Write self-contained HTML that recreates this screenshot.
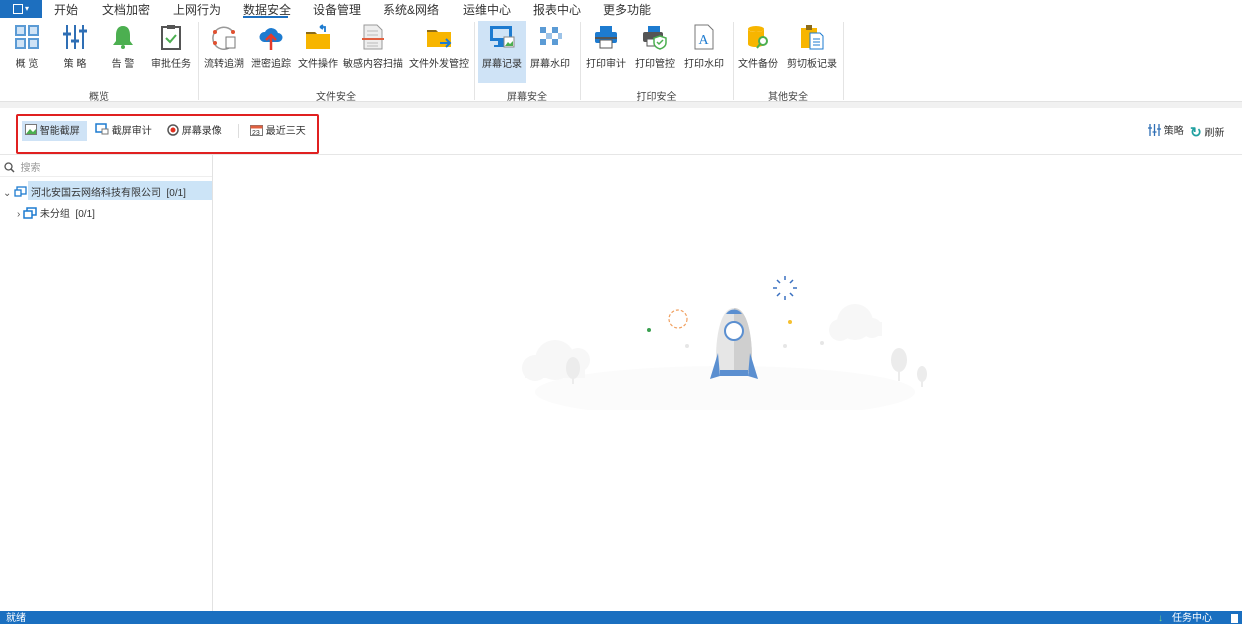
<!DOCTYPE html>
<html><head><meta charset="utf-8"><style>
*{margin:0;padding:0;box-sizing:border-box}
body{width:1242px;height:624px;position:relative;overflow:hidden;background:#fff;font-family:"Liberation Sans","Noto Sans CJK SC",sans-serif;color:#333}
.a{position:absolute}
.tab{position:absolute;top:1px;font-size:12px;color:#333}
.it{position:absolute;top:21px;height:62px;text-align:center;font-size:10px;color:#333}
.it svg{display:block;margin:3px auto 0}
.it span{position:absolute;top:34px;left:0;right:0;white-space:nowrap}
.gl{position:absolute;top:88px;font-size:10px;color:#444;text-align:center}
.sep{position:absolute;top:22px;width:1px;height:78px;background:#e4e4e4}
.tb{position:absolute;top:122px;height:20px;font-size:10px;line-height:20px;color:#333;white-space:nowrap}
</style></head><body>
<div class="a" style="left:0;top:0;width:42px;height:18px;background:#1d6fbf"></div>
<div class="a" style="left:13px;top:4px;width:10px;height:10px;border:1.5px solid #fff;"></div>
<div class="a" style="left:25px;top:4px;color:#fff;font-size:8px">▾</div>
<div class="tab" style="left:54px">开始</div>
<div class="tab" style="left:102px">文档加密</div>
<div class="tab" style="left:173px">上网行为</div>
<div class="tab" style="left:243px">数据安全</div>
<div class="a" style="left:243px;top:16px;width:45px;height:2px;background:#1d6fbf"></div>
<div class="tab" style="left:313px">设备管理</div>
<div class="tab" style="left:383px">系统&amp;网络</div>
<div class="tab" style="left:463px">运维中心</div>
<div class="tab" style="left:533px">报表中心</div>
<div class="tab" style="left:603px">更多功能</div>
<div class="a" style="left:478px;top:21px;width:48px;height:62px;background:#cfe3f6"></div>
<div class="it" style="left:3px;width:48px"><svg width="26" height="26"><g fill="#5b9bd5"><rect x="1" y="1" width="11" height="11"/><rect x="14" y="1" width="11" height="11"/><rect x="1" y="14" width="11" height="11"/><rect x="14" y="14" width="11" height="11"/></g><g fill="#cfe3f6"><rect x="3" y="3" width="7" height="7"/><rect x="16" y="3" width="7" height="7"/><rect x="3" y="16" width="7" height="7"/><rect x="16" y="16" width="7" height="7"/></g></svg><span>概 览</span></div>
<div class="it" style="left:51px;width:48px"><svg width="26" height="26" stroke="#2f6fb5" stroke-width="2"><path d="M5 1v24M13 1v24M21 1v24"/><path d="M1 10h8M9 17h8M17 7h8" stroke-width="3"/></svg><span>策 略</span></div>
<div class="it" style="left:99px;width:48px"><svg width="26" height="26"><path d="M13 2c-5 0-7 4-7 9v6l-3 4h20l-3-4v-6c0-5-2-9-7-9z" fill="#4caf50"/><circle cx="13" cy="23" r="2" fill="#4caf50"/></svg><span>告 警</span></div>
<div class="it" style="left:147px;width:48px"><svg width="26" height="26"><rect x="4" y="3" width="18" height="22" fill="none" stroke="#555" stroke-width="2"/><rect x="9" y="1" width="8" height="4" fill="#555"/><path d="M8 14l4 4 6-7" fill="none" stroke="#4caf50" stroke-width="2"/></svg><span>审批任务</span></div>
<div class="sep" style="left:198px"></div>
<div class="it" style="left:200px;width:48px"><svg width="26" height="26"><path d="M22 8a11 11 0 1 0-4 16" fill="none" stroke="#999" stroke-width="1.5"/><rect x="15" y="13" width="9" height="11" fill="#fff" stroke="#777"/><circle cx="4" cy="8" r="2" fill="#e05030"/><circle cx="22" cy="8" r="2" fill="#e05030"/><circle cx="4" cy="19" r="2" fill="#e05030"/></svg><span>流转追溯</span></div>
<div class="it" style="left:247px;width:48px"><svg width="26" height="26"><path d="M6 18a5 5 0 0 1 1-10 7 7 0 0 1 13 1 4.5 4.5 0 0 1 0 9z" fill="#1d7bd0"/><path d="M13 26V11M8 16l5-5 5 5" fill="none" stroke="#e53b2a" stroke-width="2.5"/></svg><span>泄密追踪</span></div>
<div class="it" style="left:294px;width:48px"><svg width="26" height="26"><path d="M1 8h9l2 2h13v15H1z" fill="#f7b500"/><path d="M1 8h9l2 2H1z" fill="#8b6b1a"/><path d="M20 8V3h-5M15 3l3-2M15 3l3 2" fill="none" stroke="#1d7bd0" stroke-width="1.8"/></svg><span>文件操作</span></div>
<div class="it" style="left:343px;width:60px"><svg width="26" height="26"><path d="M4 1h13l5 5v19H4z" fill="#eee" stroke="#999"/><path d="M7 7h11M7 11h11M7 19h11M7 22h11" stroke="#bbb"/><rect x="2" y="14" width="22" height="2" fill="#e06040"/></svg><span>敏感内容扫描</span></div>
<div class="it" style="left:408px;width:62px"><svg width="26" height="26"><path d="M1 6h9l2 2h13v15H1z" fill="#f7b500"/><path d="M1 6h9l2 2H1z" fill="#8b6b1a"/><path d="M14 19h10M20 15l4 4-4 4" fill="none" stroke="#1d7bd0" stroke-width="2"/></svg><span>文件外发管控</span></div>
<div class="sep" style="left:474px"></div>
<div class="it" style="left:478px;width:48px"><svg width="26" height="26"><rect x="1" y="2" width="22" height="15" fill="#1d7bd0"/><rect x="4" y="5" width="16" height="9" fill="#cfe3f6"/><rect x="9" y="17" width="6" height="4" fill="#1d7bd0"/><rect x="5" y="21" width="14" height="2" fill="#1d7bd0"/><rect x="15" y="13" width="10" height="10" fill="#fff" stroke="#888"/><path d="M16 22l3-4 2 2 3-3v5z" fill="#4caf50"/></svg><span>屏幕记录</span></div>
<div class="it" style="left:526px;width:48px"><svg width="26" height="26" fill="#5b9bd5"><rect x="3" y="3" width="6" height="6"/><rect x="15" y="3" width="6" height="6"/><rect x="9" y="9" width="6" height="6" fill="#9cc3e8"/><rect x="3" y="15" width="6" height="6"/><rect x="15" y="15" width="6" height="6"/><rect x="21" y="9" width="4" height="6" fill="#9cc3e8"/></svg><span>屏幕水印</span></div>
<div class="sep" style="left:580px"></div>
<div class="it" style="left:582px;width:48px"><svg width="26" height="26"><rect x="7" y="2" width="12" height="6" fill="#1d7bd0"/><rect x="2" y="8" width="22" height="11" rx="2" fill="#1d7bd0"/><rect x="2" y="13" width="22" height="2" fill="#555"/><rect x="7" y="16" width="12" height="8" fill="#fff" stroke="#555"/></svg><span>打印审计</span></div>
<div class="it" style="left:631px;width:48px"><svg width="26" height="26"><rect x="6" y="2" width="12" height="6" fill="#1d7bd0"/><rect x="1" y="8" width="20" height="10" rx="2" fill="#555"/><rect x="5" y="15" width="10" height="7" fill="#fff" stroke="#555"/><path d="M18 12l6 2v5c0 3-3 5-6 6-3-1-6-3-6-6v-5z" fill="#fff" stroke="#4caf50" stroke-width="1.5"/><path d="M15 18l2 2 4-4" fill="none" stroke="#4caf50" stroke-width="1.5"/></svg><span>打印管控</span></div>
<div class="it" style="left:680px;width:48px"><svg width="26" height="26"><path d="M4 1h13l5 5v19H4z" fill="#fff" stroke="#777"/><text x="7.5" y="20" font-family="Liberation Serif" font-size="14" fill="#1d7bd0">A</text></svg><span>打印水印</span></div>
<div class="sep" style="left:733px"></div>
<div class="it" style="left:734px;width:48px"><svg width="26" height="26"><ellipse cx="11" cy="5" rx="8" ry="3" fill="#f7b500"/><path d="M3 5v15c0 2 4 3 8 3s8-1 8-3V5c0 2-4 3-8 3s-8-1-8-3z" fill="#f7b500"/><circle cx="18" cy="17" r="4" fill="#fff" stroke="#4caf50" stroke-width="2"/><path d="M15 20l-3 4" stroke="#4caf50" stroke-width="2"/></svg><span>文件备份</span></div>
<div class="it" style="left:785px;width:54px"><svg width="26" height="26"><rect x="2" y="4" width="16" height="20" fill="#f7b500"/><rect x="7" y="1" width="6" height="5" fill="#8b6b1a"/><path d="M11 9h10l3 3v13H11z" fill="#fff" stroke="#1d7bd0"/><path d="M14 15h7M14 18h7M14 21h7" stroke="#1d7bd0"/></svg><span>剪切板记录</span></div>
<div class="sep" style="left:843px"></div>
<div class="gl" style="left:0;width:198px">概览</div>
<div class="gl" style="left:198px;width:276px">文件安全</div>
<div class="gl" style="left:474px;width:106px">屏幕安全</div>
<div class="gl" style="left:580px;width:153px">打印安全</div>
<div class="gl" style="left:733px;width:110px">其他安全</div>
<div class="a" style="left:0;top:101px;width:1242px;height:7px;background:#f1f1f1;border-top:1px solid #e2e2e2"></div>
<div class="a" style="left:16px;top:114px;width:303px;height:40px;border:2px solid #e02020;border-radius:2px"></div>
<div class="a" style="left:22px;top:121px;width:65px;height:20px;background:#cfe3f6"></div>
<div class="tb" style="left:25px"><svg width="12" height="11" style="vertical-align:-1px"><rect x=".5" y=".5" width="11" height="10" fill="#fff" stroke="#777"/><path d="M1 10l4-5 3 3 3-3v5z" fill="#4caf50"/></svg> 智能截屏</div>
<div class="tb" style="left:95px"><svg width="14" height="12" style="vertical-align:-1px"><rect x="1" y="1" width="10" height="8" fill="none" stroke="#1d7bd0" stroke-width="1.5"/><rect x="7" y="6" width="6" height="5" fill="#fff" stroke="#777"/></svg> 截屏审计</div>
<div class="tb" style="left:167px"><svg width="12" height="12" style="vertical-align:-2px"><circle cx="6" cy="6" r="5" fill="#fff" stroke="#555" stroke-width="1.5"/><circle cx="6" cy="6" r="2.5" fill="#e03020"/></svg> 屏幕录像</div>
<div class="a" style="left:238px;top:124px;width:1px;height:14px;background:#ddd"></div>
<div class="tb" style="left:250px"><svg width="13" height="12" style="vertical-align:-2px"><rect x=".5" y="1.5" width="12" height="10" fill="#fff" stroke="#777"/><rect x=".5" y="1.5" width="12" height="3" fill="#e06040"/><text x="2" y="11" font-size="7" fill="#333">23</text></svg> 最近三天</div>
<div class="tb" style="left:1148px;top:122px"><svg width="13" height="12" style="vertical-align:-2px" stroke="#2f6fb5" stroke-width="1.3"><path d="M2 0v12M6.5 0v12M11 0v12M0 4h4M4.5 8h4M9 5h4"/></svg> 策略</div>
<div class="tb" style="left:1190px;top:122px"><span style="color:#20a0a0;font-size:14px;font-weight:bold;vertical-align:-1px">↻</span> 刷新</div>
<div class="a" style="left:0;top:154px;width:1242px;height:1px;background:#e6e6e6"></div>
<div class="a" style="left:212px;top:155px;width:1px;height:456px;background:#e2e2e2"></div>
<div class="a" style="left:4px;top:159px;font-size:10px;color:#999"><svg width="11" height="11" style="vertical-align:-2px"><circle cx="4.5" cy="4.5" r="3.5" fill="none" stroke="#555" stroke-width="1.3"/><path d="M7 7l3 3" stroke="#555" stroke-width="1.5"/></svg> &nbsp;搜索</div>
<div class="a" style="left:0;top:176px;width:212px;height:1px;background:#eee"></div>
<div class="a" style="left:28px;top:181px;width:184px;height:19px;background:#cce4f7"></div>
<div class="a" style="left:3px;top:184px;font-size:10px;color:#333;white-space:nowrap"><span style="color:#555">⌄</span> <svg width="14" height="12" style="vertical-align:-2px"><rect x="3" y="1" width="9" height="7" fill="#fff" stroke="#1d7bd0" stroke-width="1.3"/><rect x="1" y="4" width="6" height="6" fill="#fff" stroke="#1d7bd0" stroke-width="1.3"/></svg> 河北安国云网络科技有限公司 &nbsp;[0/1]</div>
<div class="a" style="left:17px;top:205px;font-size:10px;color:#333;white-space:nowrap"><span style="color:#555">›</span> <svg width="14" height="12" style="vertical-align:-2px"><rect x="4" y="1" width="9" height="7" fill="#fff" stroke="#1d7bd0" stroke-width="1.5"/><rect x="1" y="4" width="8" height="7" fill="#fff" stroke="#1d7bd0" stroke-width="1.5"/></svg> 未分组 &nbsp;[0/1]</div>
<svg class="a" style="left:510px;top:260px" width="430" height="150">
<ellipse cx="215" cy="132" rx="190" ry="26" fill="#fbfbfb"/>
<g fill="#f7f7f7"><circle cx="45" cy="100" r="20"/><circle cx="25" cy="108" r="13"/><circle cx="68" cy="100" r="12"/><rect x="15" y="100" width="60" height="18"/>
<circle cx="345" cy="62" r="18"/><circle cx="330" cy="70" r="11"/><circle cx="362" cy="68" r="10"/><rect x="322" y="62" width="50" height="14"/></g>
<g fill="#ececec"><ellipse cx="63" cy="108" rx="7" ry="11"/><rect x="62" y="110" width="2" height="14"/><ellipse cx="389" cy="100" rx="8" ry="12"/><rect x="388" y="105" width="2" height="16"/><ellipse cx="412" cy="114" rx="5" ry="8"/><rect x="411" y="116" width="2" height="11"/></g>
<path d="M224 48c-14 0-18 30-18 50v14h36V98c0-20-4-50-18-50z" fill="#e6e6e6"/>
<path d="M224 48c14 0 18 30 18 50v14h-18z" fill="#cfcfcf"/>
<path d="M216 54c4-6 12-6 16 0z" fill="#5b8fd0"/>
<circle cx="224" cy="71" r="9" fill="#fff" stroke="#5b8fd0" stroke-width="2"/>
<path d="M208 93l-8 26 10-3z M240 93l8 26-10-3z" fill="#5b8fd0"/>
<path d="M210 110h28v6h-28z" fill="#5b8fd0"/>
<circle cx="168" cy="59" r="9" fill="none" stroke="#f0a060" stroke-width="1.2" stroke-dasharray="3 2"/>
<circle cx="139" cy="70" r="2" fill="#3aa050"/><circle cx="280" cy="62" r="2" fill="#f5c030"/>
<circle cx="177" cy="86" r="2" fill="#e6e6e6"/><circle cx="275" cy="86" r="2" fill="#e6e6e6"/><circle cx="312" cy="83" r="2" fill="#e6e6e6"/>
<g stroke="#3a70c0" stroke-width="1.5" transform="translate(275,28)"><path d="M0-12v4M0 12v-4M-12 0h4M12 0h-4M-8-8l3 3M8 8l-3-3M-8 8l3-3M8-8l-3 3"/></g>
</svg>
<div class="a" style="left:0;top:611px;width:1242px;height:13px;background:#1a6fc0;color:#fff;font-size:10px;line-height:15px">
<span style="position:absolute;left:6px">就绪</span>
<span style="position:absolute;left:1158px;color:#7ed87e">↓</span>
<span style="position:absolute;left:1172px">任务中心</span>
<span style="position:absolute;left:1231px;top:3px;width:7px;height:9px;background:#fff"></span>
</div>
</body></html>
